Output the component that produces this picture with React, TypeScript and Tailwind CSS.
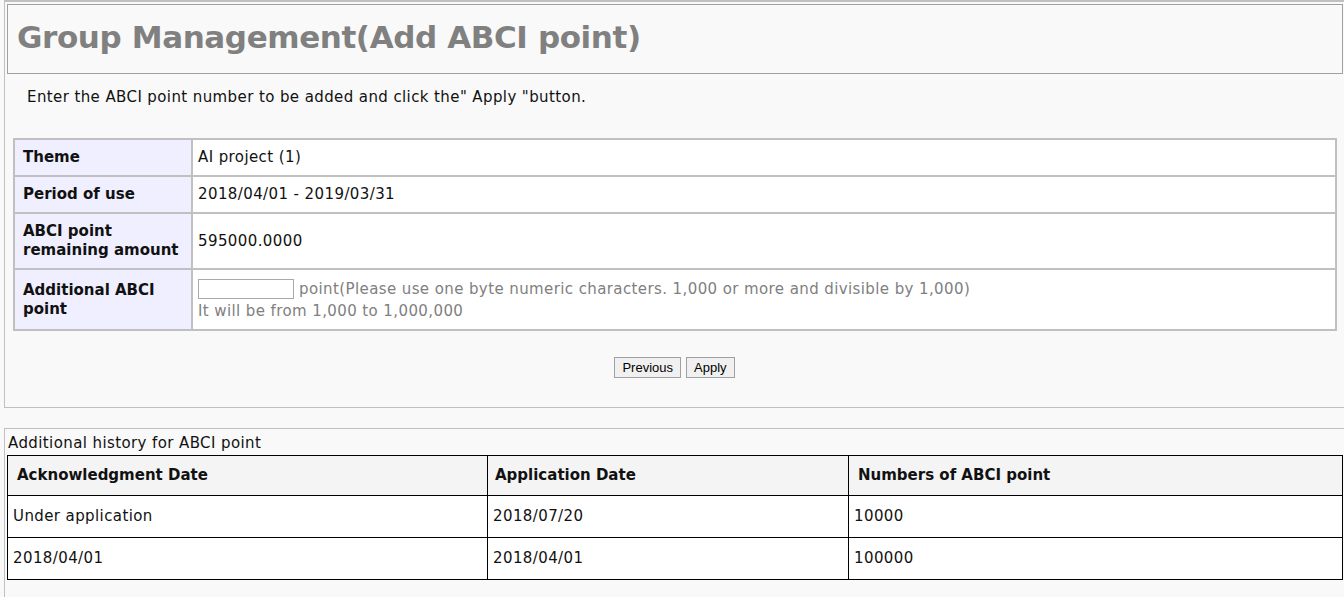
import React from 'react'

const font = { fontFamily: '"DejaVu Sans", Verdana, sans-serif' }
const btnFont = { fontFamily: '"Liberation Sans", Arial, sans-serif' }

const info = [
  { label: 'Theme', value: 'AI project (1)', h: 'h-[37px]' },
  { label: 'Period of use', value: '2018/04/01 - 2019/03/31', h: 'h-[37px]' },
  { label: 'ABCI point remaining amount', value: '595000.0000', h: 'h-[56px]' },
]

const history = [
  ['Under application', '2018/07/20', '10000'],
  ['2018/04/01', '2018/04/01', '100000'],
]

const App = () => {
  return (
    <div className="min-h-screen bg-[#f9f9f9] text-[#111] text-[15px] tracking-[0.4px]" style={font}>
      <div className="ml-[4px] h-[408px] border-t-2 border-l border-b border-[#c0c0c0] pt-[2px]">
        <div className="ml-[2px] mr-[1px] h-[70px] border border-[#a0a0a0] flex items-center pl-[9px] pb-[3px]">
          <h1 className="text-[31px] font-bold text-[#808080] tracking-[-0.4px]">
            Group Management(Add ABCI point)
          </h1>
        </div>

        <p className="pl-[22px] pt-[12px] h-[64px]">
          Enter the ABCI point number to be added and click the" Apply "button.
        </p>

        <table className="ml-[8px] w-[1324px] border-collapse border-2 border-[#c0c0c0]">
          <tbody>
            {info.map(r => (
              <tr key={r.label} className={r.h}>
                <th className="w-[178px] bg-[#efefff] border-2 border-[#c0c0c0] text-left font-bold tracking-normal pl-[8px] pr-1 leading-[19px]">
                  {r.label}
                </th>
                <td className="bg-white border-2 border-[#c0c0c0] pl-[5px]">{r.value}</td>
              </tr>
            ))}
            <tr className="h-[61px]">
              <th className="bg-[#efefff] border-2 border-[#c0c0c0] text-left font-bold tracking-normal pl-[8px] pr-1 leading-[19px]">
                Additional ABCI point
              </th>
              <td className="bg-white border-2 border-[#c0c0c0] pl-[5px] text-[#808080] leading-[22px]">
                <div className="flex items-center gap-[5px]">
                  <input type="text" className="w-[96px] h-[20px] border border-[#a9a9a9] bg-white" />
                  <span>point(Please use one byte numeric characters. 1,000 or more and divisible by 1,000)</span>
                </div>
                <div>It will be from 1,000 to 1,000,000</div>
              </td>
            </tr>
          </tbody>
        </table>

        <div className="flex justify-center gap-[5px] pt-[26px]">
          <button
            className="h-[21px] px-[7px] border border-[#a0a0a0] bg-[#f0f0f0] text-[13px] tracking-normal text-black"
            style={btnFont}
          >
            Previous
          </button>
          <button
            className="h-[21px] px-[7px] border border-[#a0a0a0] bg-[#f0f0f0] text-[13px] tracking-normal text-black"
            style={btnFont}
          >
            Apply
          </button>
        </div>
      </div>

      <div className="ml-[4px] mt-[20px] border-t border-l border-[#c0c0c0] pl-[2px] pt-[3px] pb-[20px]">
        <div className="leading-[23px] pl-[1px]">Additional history for ABCI point</div>
        <table className="w-[1336px] border-collapse border border-black">
          <thead>
            <tr className="h-[40px] bg-[#f4f4f4]">
              <th className="w-[480px] border border-black text-left font-bold tracking-normal pl-[9px]">Acknowledgment Date</th>
              <th className="w-[361px] border border-black text-left font-bold tracking-normal pl-[7px]">Application Date</th>
              <th className="border border-black text-left font-bold tracking-normal pl-[9px]">Numbers of ABCI point</th>
            </tr>
          </thead>
          <tbody>
            {history.map((r, i) => (
              <tr key={i} className="h-[42px] bg-white">
                {r.map((c, j) => (
                  <td key={j} className="border border-black pl-[5px]">{c}</td>
                ))}
              </tr>
            ))}
          </tbody>
        </table>
      </div>
    </div>
  )
}

export default App
